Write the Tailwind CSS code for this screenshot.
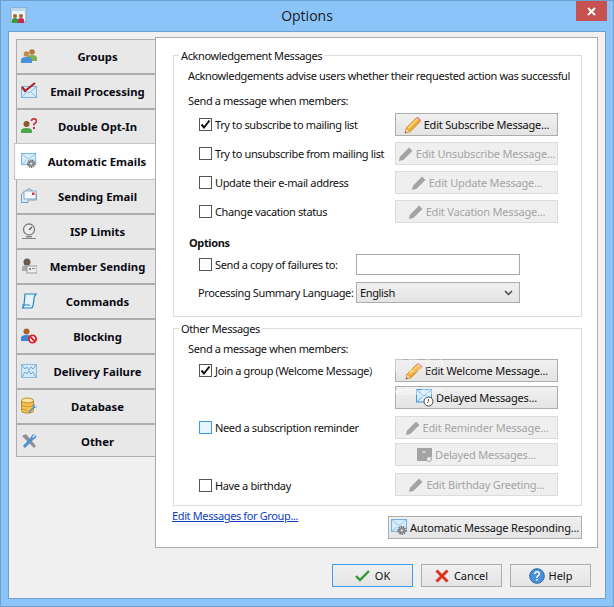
<!DOCTYPE html>
<html><head><meta charset="utf-8"><script src="https://cdn.jsdelivr.net/npm/@tailwindcss/browser@4"></script></head>
<body class="m-0 overflow-hidden">
<svg width="0" height="0" class="absolute">
<defs>
<symbol id="pencil" viewBox="0 0 18 18"><path d="M1 17l1.2-5L12.5 1.800l3.700 3.700L6 15.800z" fill="#f2a93b" stroke="#c57a1c" stroke-width=".8"/><path d="M3.500 11.500L13 2l1.500 1.500-9.500 9.500z" fill="#fbd267"/><path d="M12.500 1.800l1.300-1.200 3.600 3.600-1.200 1.300z" fill="#e58bb0"/><path d="M1 17l1.200-4 2.800 2.800z" fill="#f5dcae"/><path d="M1 17l.5-1.800 1.300 1.300z" fill="#333"/></symbol>
<symbol id="pencilg" viewBox="0 0 18 18"><path d="M1 17l1.200-5L12.500 1.800l3.700 3.700L6 15.800z" fill="#a3a3a3"/></symbol>
<symbol id="envgear" viewBox="0 0 18 18"><rect x=".5" y=".5" width="16" height="12.500" fill="#d6ecfb" stroke="#6aaee2"/><path d="M1 1l7.500 6L16 1M1 13l5-5M16 13l-5-5" fill="none" stroke="#8fc2ea"/><circle cx="11.500" cy="12" r="3.800" fill="none" stroke="#6f6f6f" stroke-width="2" stroke-dasharray="1.500 .8"/><circle cx="11.500" cy="12" r="2.800" fill="#9a9a9a" stroke="#7d7d7d"/><circle cx="11.500" cy="12" r="1" fill="#eee"/></symbol>
<symbol id="envclock" viewBox="0 0 18 18"><rect x=".5" y=".5" width="15" height="12.500" fill="#d6ecfb" stroke="#3f97dc"/><path d="M1 1l7 6 7-6M1 13l5-5" fill="none" stroke="#6fb1e4"/><circle cx="12.500" cy="12.500" r="4.500" fill="#fff" stroke="#444"/><path d="M12.500 10v2.500l-1.500 1.500" fill="none" stroke="#c33"/></symbol>
</defs>
</svg>
<div class="w-[614px] h-[607px] bg-[#8bc4f9] border border-[#6f9fcf] relative text-[11px] tracking-[-0.37px] leading-[15px] text-[#111] font-['Noto_Sans',sans-serif] overflow-hidden">
  <!-- title bar -->
  <div class="h-[30px] relative flex items-center justify-center tracking-normal">
    <svg class="absolute left-[9px] top-[6px]" width="17" height="17" viewBox="0 0 17 17"><rect x="1" y="1" width="15" height="14" fill="#e8f3fb" stroke="#8d9ba8"/><rect x="1" y="1" width="15" height="3" fill="#b9d7ee"/><circle cx="5" cy="9" r="2" fill="#a8622a"/><circle cx="11" cy="9" r="2" fill="#a8622a"/><path d="M2 16v-3q0-2 3-2t3 2v3z" fill="#3a9a3a"/><path d="M8 16v-3q0-2 3-2t3 2v3z" fill="#c2255c"/></svg>
    <span class="text-[14px] text-[#1a1a1a] font-['Open_Sans',sans-serif] mt-[-1px]">Options</span>
    <div class="absolute right-[6px] top-0 w-[31px] h-[20px] bg-[#c75050] flex items-center justify-center">
      <svg width="9" height="9" viewBox="0 0 9 9"><path d="M1 1l7 7M8 1l-7 7" stroke="#fff" stroke-width="2"/></svg>
    </div>
  </div>
  <!-- client area -->
  <div class="ml-[7px] w-[598px] h-[568px] bg-[#f0f0f0] border border-[#6f9fcf] flex flex-col relative">
    <div class="flex h-[516px]">
      <!-- tabs -->
      <div class="w-[146px] pt-[7px] pl-[5px] flex flex-col items-end shrink-0 z-10 font-bold text-[#0a0a14] tracking-normal text-[11.3px]">
        <div class="w-[139px] h-[35px] bg-[#e8e8e8] border border-r-0 border-[#adadad] flex items-center relative"><span class="absolute left-[4px] top-[8px]"><svg width="16" height="16" viewBox="0 0 16 16"><circle cx="11" cy="4" r="2.800" fill="#b5793c"/><path d="M6 13v-3q0-3 5-3t5 3v3z" fill="#7db04e"/><circle cx="5.500" cy="6" r="2.800" fill="#c58a4c"/><path d="M0 15v-3q0-3 5.500-3t5.500 3v3z" fill="#4d90d8"/></svg></span><span class="w-full text-center pl-[26px] pr-[3px]">Groups</span></div>
        <div class="w-[139px] h-[35px] bg-[#e8e8e8] border border-r-0 border-[#adadad] flex items-center relative"><span class="absolute left-[4px] top-[7px]"><svg width="16" height="17" viewBox="0 0 16 17"><rect x="0.500" y="4.500" width="15" height="11" fill="#d6ecfb" stroke="#7db4e0"/><path d="M1 5l7 6 7-6M1 15l5-5M15 15l-5-5" fill="none" stroke="#8cbde6"/><path d="M1 5l3 4 10-8" fill="none" stroke="#b3202c" stroke-width="2.200"/></svg></span><span class="w-full text-center pl-[26px] pr-[3px]">Email Processing</span></div>
        <div class="w-[139px] h-[34px] bg-[#e8e8e8] border border-r-0 border-b-0 border-[#adadad] flex items-center relative"><span class="absolute left-[4px] top-[8px]"><svg width="16" height="16" viewBox="0 0 16 16"><circle cx="5.500" cy="6" r="3" fill="#8a5a2c"/><path d="M0 15v-2q0-3 5.500-3t5.500 3v2z" fill="#4aa84a"/><path d="M10.500 3q0-2.200 2.500-2.200t2.500 2.200q0 1.500-2.500 3v1.500" fill="none" stroke="#c9353f" stroke-width="1.700"/><rect x="12" y="9" width="2" height="2" fill="#c9353f"/></svg></span><span class="w-full text-center pl-[26px] pr-[3px]">Double Opt-In</span></div>
        <div class="w-[141px] h-[37px] bg-white border border-r-0 border-[#c4c4c4] flex items-center relative"><span class="absolute left-[6px] top-[9px]"><svg width="16" height="16"><use href="#envgear"/></svg></span><span class="w-full text-center pl-[29px] pr-[5px]">Automatic Emails</span></div>
        <div class="w-[139px] h-[34px] bg-[#e8e8e8] border border-r-0 border-t-0 border-[#adadad] flex items-center relative"><span class="absolute left-[4px] top-[7px]"><svg width="16" height="16" viewBox="0 0 16 16"><path d="M.5 7L8 1.500 15.500 7v6H7v2.500H.5z" fill="#dbe9f5" stroke="#7a9cbc"/><rect x="3" y="4" width="12" height="8" fill="#f4f8fb" stroke="#8aa9c5"/><rect x="11" y="5.500" width="2.500" height="2.500" fill="#d7333a"/></svg></span><span class="w-full text-center pl-[26px] pr-[3px]">Sending Email</span></div>
        <div class="w-[139px] h-[35px] bg-[#e8e8e8] border border-r-0 border-[#adadad] flex items-center relative"><span class="absolute left-[4px] top-[8px]"><svg width="16" height="16" viewBox="0 0 16 16"><circle cx="8" cy="6.500" r="5.500" fill="#eee" stroke="#7d7d7d" stroke-width="1.300"/><path d="M8 7l3-3" stroke="#555" stroke-width="1.200"/><path d="M5 13h6v1.500H5zM1 15h14v1H1z" fill="#888"/></svg></span><span class="w-full text-center pl-[26px] pr-[3px]">ISP Limits</span></div>
        <div class="w-[139px] h-[35px] bg-[#e8e8e8] border border-r-0 border-[#adadad] flex items-center relative"><span class="absolute left-[4px] top-[7px]"><svg width="16" height="17" viewBox="0 0 16 17"><circle cx="6" cy="5" r="3.500" fill="#6a5a4c"/><path d="M1 14v-3q0-3 5-3t5 3v3z" fill="#a8a8a8"/><rect x="6" y="9" width="10" height="7" fill="#eee" stroke="#999"/><path d="M8 11h2v2H8zM11 11h3v1h-3z" fill="#888"/></svg></span><span class="w-full text-center pl-[26px] pr-[3px]">Member Sending</span></div>
        <div class="w-[139px] h-[35px] bg-[#e8e8e8] border border-r-0 border-[#adadad] flex items-center relative"><span class="absolute left-[4px] top-[8px]"><svg width="16" height="16" viewBox="0 0 16 16"><path d="M4 1h11q-2 2-2 5l-1 7q-.5 2-2 2H1q2-1 2-3z" fill="#e4f3fc" stroke="#1f86c8" stroke-width="1.200"/><path d="M1 12h7q1 0 1 1" fill="none" stroke="#1f86c8"/></svg></span><span class="w-full text-center pl-[26px] pr-[3px]">Commands</span></div>
        <div class="w-[139px] h-[35px] bg-[#e8e8e8] border border-r-0 border-[#adadad] flex items-center relative"><span class="absolute left-[4px] top-[8px]"><svg width="16" height="16" viewBox="0 0 16 16"><circle cx="5.500" cy="3.500" r="3" fill="#a8622a"/><path d="M0 13v-3q0-3 5.500-3t5 2v4z" fill="#3c86d6"/><circle cx="11.500" cy="11" r="3.600" fill="#fff" stroke="#d8262c" stroke-width="1.900"/><path d="M9 8.500l5 5" stroke="#d8262c" stroke-width="1.900"/></svg></span><span class="w-full text-center pl-[26px] pr-[3px]">Blocking</span></div>
        <div class="w-[139px] h-[35px] bg-[#e8e8e8] border border-r-0 border-[#adadad] flex items-center relative"><span class="absolute left-[4px] top-[8px]"><svg width="16" height="16" viewBox="0 0 16 16"><rect x=".5" y="1.500" width="15" height="13" fill="#d4e9f8" stroke="#8cbde6"/><path d="M1 2l3 4 2-2 2 3 2-3 2 2 3-4M1 14l3-5 2 2 2-3 2 3 2-2 3 5" fill="none" stroke="#6fa9da"/></svg></span><span class="w-full text-center pl-[26px] pr-[3px]">Delivery Failure</span></div>
        <div class="w-[139px] h-[35px] bg-[#e8e8e8] border border-r-0 border-[#adadad] flex items-center relative"><span class="absolute left-[4px] top-[7px]"><svg width="16" height="17" viewBox="0 0 16 17"><path d="M.5 3.500v10q0 2.500 6 2.500t6-2.500v-10z" fill="#f3c24f" stroke="#b98a2a"/><ellipse cx="6.500" cy="3.500" rx="6" ry="2.500" fill="#fbe39a" stroke="#b98a2a"/><path d="M.5 7q0 2.500 6 2.500t6-2.500M.5 10.500q0 2.500 6 2.500" fill="none" stroke="#c99a35"/><path d="M7 15l5-5q-1-3 2-3l-1 2 2 1 1-2q0 3-3 3l-5 5z" fill="#4a8fd0"/></svg></span><span class="w-full text-center pl-[26px] pr-[3px]">Database</span></div>
        <div class="w-[139px] h-[33px] bg-[#e8e8e8] border border-r-0 border-[#adadad] flex items-center relative pt-[2px]"><span class="absolute left-[4px] top-[8px]"><svg width="16" height="16" viewBox="0 0 16 16"><path d="M1 3l4-2 10 12-2 2z" fill="#8f8f8f"/><path d="M14 1l-3 3 1 1 3-3q1 3-2 4L4 15l-2-2L10 4q1-3 4-3z" fill="#4b92d4"/></svg></span><span class="w-full text-center pl-[26px] pr-[3px]">Other</span></div>
      </div>
      <!-- panel -->
      <div class="w-[443px] h-[511px] mt-[5px] bg-white border border-[#adadad] pl-[17px] pr-[15px] pt-[17px] relative">
        <!-- group 1 -->
        <div class="h-[262px] border border-[#dcdcdc] relative pl-[14px] pr-[23px] pt-[12px]">
          <span class="absolute left-[5px] top-[-8px] bg-white px-[2px]">Acknowledgement Messages</span>
          <div class="h-[20px] whitespace-nowrap">Acknowledgements advise users whether their requested action was successful</div>
          <div class="h-[18px] mt-[5px] mb-[2px]">Send a message when members:</div>
          <div class="flex flex-col gap-[6px]">
            <div class="flex items-center h-[23px] pl-[11px]"><span class="w-[13px] h-[13px] border border-[#555] mr-[3px] flex items-center justify-center"><svg width="11" height="11" viewBox="0 0 11 11"><path d="M1.500 5.500l2.500 3L9.500 1.500" fill="none" stroke="#111" stroke-width="2"/></svg></span><span class="flex-1">Try to subscribe to mailing list</span>
              <button class="w-[163px] shrink-0 h-[23px] tracking-[-0.2px] bg-gradient-to-b from-[#f0f0f0] to-[#e4e4e4] border border-[#adadad] flex items-center justify-center gap-[2px] whitespace-nowrap"><svg width="18" height="18"><use href="#pencil"/></svg>Edit Subscribe Message...</button></div>
            <div class="flex items-center h-[23px] pl-[11px]"><span class="w-[13px] h-[13px] border border-[#555] mr-[3px]"></span><span class="flex-1 whitespace-nowrap">Try to unsubscribe from mailing list</span>
              <button class="w-[163px] shrink-0 h-[23px] tracking-[-0.2px] bg-[#efefef] border border-[#dbdbdb] text-[#a4a4a4] flex items-center justify-center gap-[2px] whitespace-nowrap"><svg width="16" height="16"><use href="#pencilg"/></svg>Edit Unsubscribe Message...</button></div>
            <div class="flex items-center h-[23px] pl-[11px]"><span class="w-[13px] h-[13px] border border-[#555] mr-[3px]"></span><span class="flex-1">Update their e-mail address</span>
              <button class="w-[163px] shrink-0 h-[23px] tracking-[-0.2px] bg-[#efefef] border border-[#dbdbdb] text-[#a4a4a4] flex items-center justify-center gap-[2px]"><svg width="16" height="16"><use href="#pencilg"/></svg>Edit Update Message...</button></div>
            <div class="flex items-center h-[23px] pl-[11px]"><span class="w-[13px] h-[13px] border border-[#555] mr-[3px]"></span><span class="flex-1">Change vacation status</span>
              <button class="w-[163px] shrink-0 h-[23px] tracking-[-0.2px] bg-[#efefef] border border-[#dbdbdb] text-[#a4a4a4] flex items-center justify-center gap-[2px]"><svg width="16" height="16"><use href="#pencilg"/></svg>Edit Vacation Message...</button></div>
          </div>
          <div class="h-[19px] mt-[12px] pl-[1px] font-bold">Options</div>
          <div class="flex items-center h-[21px] pl-[11px]"><span class="w-[13px] h-[13px] border border-[#555] mr-[3px]"></span><span class="w-[141px] whitespace-nowrap">Send a copy of failures to:</span><span class="w-[164px] h-[21px] bg-white border border-[#a8a8a8]"></span></div>
          <div class="flex items-center h-[21px] mt-[7px] pl-[10px]"><span class="w-[158px] whitespace-nowrap">Processing Summary Language:</span><div class="w-[164px] h-[21px] bg-gradient-to-b from-[#f0f0f0] to-[#e4e4e4] border border-[#adadad] flex items-center justify-between pl-[3px] pr-[6px]">English<svg width="9" height="6" viewBox="0 0 9 6"><path d="M1 1l3.500 3.500L8 1" fill="none" stroke="#444" stroke-width="1.500"/></svg></div></div>
        </div>
        <!-- group 2 -->
        <div class="h-[178px] mt-[11px] border border-[#dcdcdc] relative pl-[14px] pr-[23px] pt-[12px]">
          <span class="absolute left-[5px] top-[-8px] bg-white px-[2px]">Other Messages</span>
          <div class="h-[18px]">Send a message when members:</div>
          <div class="flex flex-col">
            <div class="flex items-start h-[57px] pl-[11px]"><span class="w-[13px] h-[13px] mt-[5px] border border-[#555] mr-[3px] flex items-center justify-center"><svg width="11" height="11" viewBox="0 0 11 11"><path d="M1.500 5.500l2.500 3L9.500 1.500" fill="none" stroke="#111" stroke-width="2"/></svg></span><span class="flex-1 mt-[4px] whitespace-nowrap">Join a group (Welcome Message)</span>
              <div class="flex flex-col gap-[4px] w-[163px] shrink-0 tracking-[-0.2px]"><button class="h-[23px] bg-gradient-to-b from-[#f0f0f0] to-[#e4e4e4] border border-[#adadad] flex items-center justify-center gap-[2px]"><svg width="18" height="18"><use href="#pencil"/></svg>Edit Welcome Message...</button><button class="h-[23px] bg-gradient-to-b from-[#f0f0f0] to-[#e4e4e4] border border-[#adadad] flex items-center justify-center gap-[2px]"><svg width="18" height="18"><use href="#envclock"/></svg>Delayed Messages...</button></div></div>
            <div class="flex items-start h-[57px] pl-[11px]"><span class="w-[13px] h-[13px] mt-[5px] border border-[#3d9cf0] bg-[#eaf4fd] mr-[3px]"></span><span class="flex-1 mt-[4px]">Need a subscription reminder</span>
              <div class="flex flex-col gap-[4px] w-[163px] shrink-0 tracking-[-0.2px]"><button class="h-[23px] bg-[#efefef] border border-[#dbdbdb] text-[#a4a4a4] flex items-center justify-center gap-[2px]"><svg width="16" height="16"><use href="#pencilg"/></svg>Edit Reminder Message...</button><button class="h-[23px] bg-[#efefef] border border-[#dbdbdb] text-[#a4a4a4] flex items-center justify-center gap-[2px]"><svg width="16" height="16" viewBox="0 0 16 16"><path d="M0 1h15v9l-3 0-2 4H0z" fill="#a3a3a3"/><path d="M5 4l2 2 2-2" fill="none" stroke="#eee"/><circle cx="12" cy="12" r="2.500" fill="#eee" stroke="#a3a3a3"/></svg>Delayed Messages...</button></div></div>
            <div class="flex items-center h-[23px] pl-[11px]"><span class="w-[13px] h-[13px] border border-[#555] mr-[3px] mt-[2px]"></span><span class="flex-1 mt-[2px]">Have a birthday</span>
              <button class="w-[163px] shrink-0 h-[23px] tracking-[-0.2px] bg-[#efefef] border border-[#dbdbdb] text-[#a4a4a4] flex items-center justify-center gap-[2px]"><svg width="16" height="16"><use href="#pencilg"/></svg>Edit Birthday Greeting...</button></div>
          </div>
        </div>
        <div class="flex justify-between items-start mt-[1px]">
          <a class="text-[#0e3ec0] underline mt-[1px] -ml-px">Edit Messages for Group...</a>
          <button class="w-[194px] h-[23px] mt-[9px] tracking-[-0.2px] bg-gradient-to-b from-[#f0f0f0] to-[#e4e4e4] border border-[#adadad] flex items-center justify-center gap-[2px] whitespace-nowrap"><svg width="17" height="17"><use href="#envgear"/></svg>Automatic Message Responding...</button>
        </div>
        <!-- watermark -->
        <div class="absolute left-[165px] top-[320px] text-white/40 text-[19px] font-['Liberation_Serif',serif] tracking-[3px] pointer-events-none whitespace-nowrap">SOFTPEDIA</div>
        <div class="absolute left-[184px] top-[345px] text-white/50 text-[11px] font-bold pointer-events-none whitespace-nowrap">www.softpedia.com</div>
      </div>
    </div>
    <!-- footer -->
    <div class="flex justify-end gap-[8px] pr-[14px] mt-[16px] tracking-normal">
      <button class="w-[81px] h-[23px] bg-gradient-to-b from-[#f0f0f0] to-[#e4e4e4] border border-[#3d9cf0] flex items-center justify-center gap-[5px]"><svg width="15" height="13" viewBox="0 0 15 13"><path d="M1 7l4 4 9-9" fill="none" stroke="#2f9a2f" stroke-width="2.400"/></svg>OK</button>
      <button class="w-[81px] h-[23px] bg-gradient-to-b from-[#f0f0f0] to-[#e4e4e4] border border-[#adadad] flex items-center justify-center gap-[5px]"><svg width="14" height="14" viewBox="0 0 14 14"><path d="M1.500 1.500l11 11M12.500 1.500l-11 11" stroke="#e0301e" stroke-width="3"/></svg>Cancel</button>
      <button class="w-[81px] h-[23px] bg-gradient-to-b from-[#f0f0f0] to-[#e4e4e4] border border-[#adadad] flex items-center justify-center gap-[4px]"><svg width="16" height="16" viewBox="0 0 16 16"><circle cx="8" cy="8" r="7.300" fill="#4a90d9" stroke="#2565a8"/><path d="M5.800 6q0-2.300 2.300-2.300T10.300 6q0 1.500-2.200 2.500V10" fill="none" stroke="#fff" stroke-width="1.500"/><rect x="7.300" y="11" width="1.600" height="1.600" fill="#fff"/></svg>Help</button>
    </div>
  </div>
</div>
</body></html>
